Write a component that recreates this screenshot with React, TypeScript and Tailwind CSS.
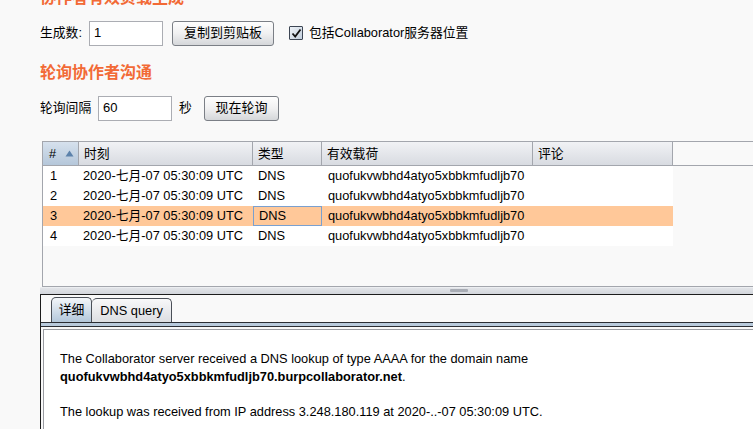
import React from 'react'

const rows = [1, 2, 3, 4]

function Button({ label, w }: { label: string; w: string }) {
  return (
    <div
      className={`${w} h-[25px] flex items-center justify-center rounded-[3px] border border-[#7b7f86] bg-gradient-to-b from-[#fefefe] via-[#f0f0f1] to-[#d5d7da] text-[13px]`}
    >
      {label}
    </div>
  )
}

function Input({ value, w }: { value: string; w: string }) {
  return (
    <div className={`${w} h-[25px] flex items-center border border-[#abadb3] bg-white pl-[4px] text-[13px]`}>
      {value}
    </div>
  )
}

function Checkbox() {
  return (
    <div className="w-[14px] h-[14px] border border-[#3d4654] rounded-[1px] bg-gradient-to-br from-[#eef2f7] to-[#c3cfdc] flex items-center justify-center">
      <svg width="11" height="11" viewBox="0 0 11 11">
        <path d="M1.5 5.5 L4.2 8.6 L9.5 1.5" fill="none" stroke="#111" strokeWidth="1.8" />
      </svg>
    </div>
  )
}

export default function App() {
  const cols = ['w-[36px]', 'w-[174px]', 'w-[69px]', 'w-[211px]', 'w-[140px]']

  return (
    <div className="w-[753px] h-[429px] overflow-hidden bg-[#f9f9f9] text-black text-[12.8px] font-['Liberation_Sans','Noto_Sans_CJK_SC',sans-serif]">
      <div className="pl-[40px]">
        <div className="mt-[-11px] h-[18px] leading-[18px] text-[16px] font-bold text-[#f26a36]">
          协作者有效负载生成
        </div>

        <div className="mt-[13px] h-[26px] flex items-center">
          <span className="w-[49px]">生成数:</span>
          <Input value="1" w="w-[74px]" />
          <div className="ml-[9px]">
            <Button label="复制到剪贴板" w="w-[102px]" />
          </div>
          <div className="ml-[15px]">
            <Checkbox />
          </div>
          <span className="ml-[6px]">包括Collaborator服务器位置</span>
        </div>

        <div className="mt-[18px] h-[18px] leading-[18px] text-[16px] font-bold text-[#f26a36]">
          轮询协作者沟通
        </div>

        <div className="mt-[13px] h-[26px] flex items-center">
          <span className="w-[58px]">轮询间隔</span>
          <Input value="60" w="w-[74px]" />
          <span className="ml-[7px] w-[25px]">秒</span>
          <Button label="现在轮询" w="w-[75px]" />
        </div>
      </div>

      {/* table pane */}
      <div className="mt-[20px] ml-[42px] w-[800px] h-[146px] border border-[#a3a6ad] bg-[#f9f9f9]">
        <div className="flex h-[24px] border-b border-[#a3a6ad]">
          <div className="w-[36px] border-r border-[#a3a6ad] bg-gradient-to-b from-[#d6e1ed] to-[#b5c7da] flex items-center pl-[6px]">
            <span>#</span>
            <svg className="ml-[9px]" width="9" height="7" viewBox="0 0 9 7">
              <path d="M4.5 0.5 L8.5 6.5 L0.5 6.5 Z" fill="#5c82ab" />
            </svg>
          </div>
          {['时刻', '类型', '有效载荷', '评论'].map((h, i) => (
            <div
              key={h}
              className={`${cols[i + 1]} border-r border-[#a3a6ad] bg-gradient-to-b from-[#f1f2f5] to-[#d8dbe1] flex items-center pl-[5px]`}
            >
              {h}
            </div>
          ))}
        </div>
        {rows.map((n) => {
          const sel = n === 3
          return (
            <div key={n} className={`flex h-[20px] w-[630px] ${sel ? 'bg-[#ffc899]' : 'bg-white'}`}>
              <div className="w-[36px] pl-[7px] flex items-center">{n}</div>
              <div className="w-[174px] pl-[4px] flex items-center">2020-七月-07 05:30:09 UTC</div>
              <div className={`w-[69px] pl-[5px] flex items-center ${sel ? 'border border-[#7aa0cf] pl-[4px]' : ''}`}>DNS</div>
              <div className="w-[211px] pl-[6px] flex items-center">quofukvwbhd4atyo5xbbkmfudljb70</div>
              <div className="w-[140px]" />
            </div>
          )
        })}
      </div>

      {/* splitter */}
      <div className="relative ml-[40px] h-[7px] border-t border-[#eceef1] bg-gradient-to-b from-[#e2e4e8] to-[#d3d6dc]">
        <div className="absolute left-[410px] top-[1px] w-[18px] h-[3px] rounded-[1px] bg-[#a8acb4]" />
      </div>

      {/* bottom tab panel */}
      <div className="ml-[40px] border-t border-l border-[#1c1c1c] bg-[#f9f9f9]">
        <div className="flex items-end h-[27px] pl-[10px]">
          <div className="w-[41px] h-[25px] rounded-t-[5px] border border-b-0 border-[#4a4f57] bg-gradient-to-b from-[#f3f6f9] to-[#b3c7db] flex items-center justify-center">
            详细
          </div>
          <div className="w-[80px] h-[24px] rounded-t-[5px] border border-l-0 border-b-0 border-[#4a4f57] bg-gradient-to-b from-[#f8f8f9] to-[#dcdee2] flex items-center justify-center">
            DNS query
          </div>
        </div>
        <div className="h-[5px] border-t border-b border-[#2a2d33] bg-[#b8cadc]" />
        <div className="h-[2px]" />
        <div className="ml-[2px] border-t border-l border-[#9a9ca2] bg-white h-[120px] pt-[20px] pl-[16px] leading-[18px]">
          <p>The Collaborator server received a DNS lookup of type AAAA for the domain name</p>
          <p className="font-bold">quofukvwbhd4atyo5xbbkmfudljb70.burpcollaborator.net<span className="font-normal">.</span></p>
          <p className="mt-[17px]">The lookup was received from IP address 3.248.180.119 at 2020-..-07 05:30:09 UTC.</p>
        </div>
      </div>
    </div>
  )
}
